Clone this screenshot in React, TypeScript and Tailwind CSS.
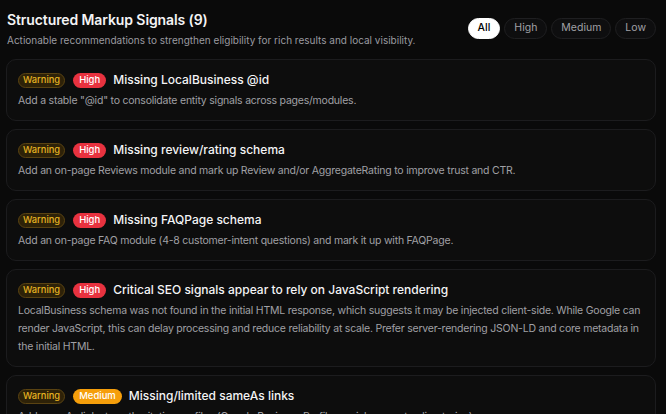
import { useState } from 'react';

type Priority = 'High' | 'Medium' | 'Low';

interface Signal {
  id: string;
  priority: Priority;
  title: string;
  detail: string;
}

const signals: Signal[] = [
  {
    id: 'localbusiness-id',
    priority: 'High',
    title: 'Missing LocalBusiness @id',
    detail: 'Add a stable "@id" to consolidate entity signals across pages/modules.',
  },
  {
    id: 'review-schema',
    priority: 'High',
    title: 'Missing review/rating schema',
    detail: 'Add an on-page Reviews module and mark up Review and/or AggregateRating to improve trust and CTR.',
  },
  {
    id: 'faq-schema',
    priority: 'High',
    title: 'Missing FAQPage schema',
    detail: 'Add an on-page FAQ module (4-8 customer-intent questions) and mark it up with FAQPage.',
  },
  {
    id: 'js-rendering',
    priority: 'High',
    title: 'Critical SEO signals appear to rely on JavaScript rendering',
    detail:
      'LocalBusiness schema was not found in the initial HTML response, which suggests it may be injected client-side. While Google can render JavaScript, this can delay processing and reduce reliability at scale. Prefer server-rendering JSON-LD and core metadata in the initial HTML.',
  },
  {
    id: 'sameas',
    priority: 'Medium',
    title: 'Missing/limited sameAs links',
    detail: 'Add sameAs links to authoritative profiles (Google Business Profile, social accounts, directories).',
  },
];

const filters = ['All', 'High', 'Medium', 'Low'] as const;

function PriorityBadge({ priority }: { priority: Priority }) {
  const cls =
    priority === 'High'
      ? 'bg-[#e8323f]'
      : priority === 'Medium'
        ? 'bg-[#f59e0b]'
        : 'bg-[#3b82f6]';
  return (
    <span className={`inline-flex h-[15px] items-center rounded-full px-[6px] text-[9.5px] font-medium text-white ${cls}`}>
      {priority}
    </span>
  );
}

export default function App() {
  const [filter, setFilter] = useState<(typeof filters)[number]>('All');

  const visible = filter === 'All' ? signals : signals.filter(s => s.priority === filter);

  return (
    <div
      className="h-[414px] overflow-hidden bg-[#0a0a0a] pl-[6px] pr-[10px] pt-[11px] text-white"
      style={{ fontFamily: 'Inter, "Noto Sans", sans-serif' }}
    >
      <div className="flex items-start justify-between">
        <div className="pl-px">
          <h2 className="text-[14px] font-semibold leading-[18px] tracking-[-0.1px] text-[#f4f4f5]">
            Structured Markup Signals (9)
          </h2>
          <p className="mt-[3px] text-[10px] leading-[16px] text-[#9a9aa0]">
            Actionable recommendations to strengthen eligibility for rich results and local visibility.
          </p>
        </div>
        <div className="mt-[7px] flex gap-[4px]">
          {filters.map(f => (
            <button
              key={f}
              onClick={() => setFilter(f)}
              className={`h-[21px] rounded-full border px-[9px] text-[10.5px] leading-none ${
                f === filter
                  ? 'border-white bg-white font-medium text-black'
                  : 'border-[#1f1f21] bg-[#0e0e0f] text-[#a1a1a6]'
              }`}
            >
              {f}
            </button>
          ))}
        </div>
      </div>

      <div className="mt-[11px] flex flex-col gap-[8px]">
        {visible.map(s => (
          <div
            key={s.id}
            className="rounded-[10px] border border-[#1c1c1e] bg-[#0d0d0d] pb-[10px] pl-[11px] pr-[10px] pt-[10px]"
          >
            <div className="flex h-[20px] items-center gap-[8px]">
              <span className="inline-flex h-[15px] items-center rounded-full border border-[#5a4312] bg-[#2e2208] px-[4px] text-[9.3px] font-medium text-[#e6b422]">
                Warning
              </span>
              <PriorityBadge priority={s.priority} />
              <span className="-ml-px text-[12px] font-medium text-[#f4f4f5]">{s.title}</span>
            </div>
            <p className="mt-[2px] text-[10.5px] leading-[18px] tracking-[-0.22px] text-[#a0a0a5]">{s.detail}</p>
          </div>
        ))}
      </div>
    </div>
  );
}
